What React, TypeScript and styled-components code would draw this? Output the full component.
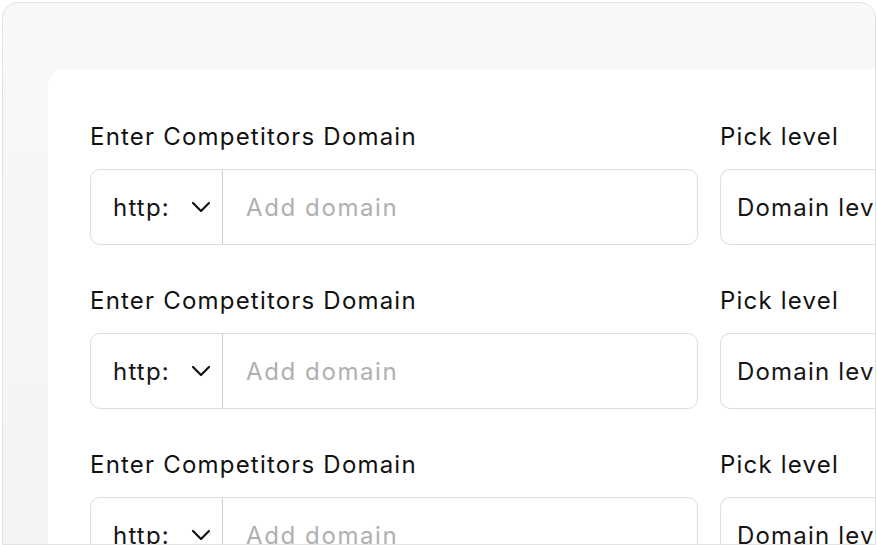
import React from 'react';
import styled, { createGlobalStyle } from 'styled-components';

const GlobalStyle = createGlobalStyle`
  html, body {
    margin: 0;
    padding: 0;
    background: #ffffff;
    overflow: hidden;
  }
  body {
    font-family: 'Inter', 'Noto Sans', sans-serif;
  }
`;

const Frame = styled.div`
  box-sizing: border-box;
  margin: 2px 1px 0 2px;
  height: 543px;
  border: 1px solid #e2e2e2;
  border-radius: 16px 16px 0 0;
  background: linear-gradient(180deg, #f9f9f9 0%, #f6f6f6 40%, #f4f4f4 100%);
  padding: 66px 0 0 45px;
  overflow: hidden;
`;

const Card = styled.div`
  background: #ffffff;
  border-radius: 16px 0 0 0;
  height: 100%;
  padding: 53px 0 0 42px;
  box-sizing: border-box;
  display: flex;
  flex-direction: column;
  gap: 41px;
`;

const Row = styled.div`
  display: flex;
  gap: 22px;
`;

const Field = styled.div<{ $width: number }>`
  display: flex;
  flex-direction: column;
  gap: 17px;
  width: ${(p) => p.$width}px;
  flex-shrink: 0;
`;

const Label = styled.div`
  height: 30px;
  line-height: 30px;
  font-size: 24px;
  color: #111111;
  letter-spacing: 1.2px;
  white-space: nowrap;
`;

const Group = styled.div`
  display: flex;
  height: 76px;
  box-sizing: border-box;
  border: 1.5px solid #dedede;
  border-radius: 10px;
  overflow: hidden;
`;

const Protocol = styled.div`
  width: 132px;
  flex-shrink: 0;
  display: flex;
  align-items: center;
  padding-left: 22px;
  box-sizing: border-box;
  border-right: 1.5px solid #cdcdcd;
  font-size: 24px;
  letter-spacing: 1.2px;
  color: #161616;
  gap: 21px;
`;

const Placeholder = styled.div`
  display: flex;
  align-items: center;
  padding-left: 23px;
  font-size: 24px;
  color: #b0b0b0;
  letter-spacing: 1.6px;
`;

const Level = styled.div`
  display: flex;
  align-items: center;
  height: 76px;
  box-sizing: border-box;
  border: 1.5px solid #dedede;
  border-right: none;
  border-radius: 10px 0 0 10px;
  padding-left: 16px;
  font-size: 24px;
  color: #161616;
  white-space: nowrap;
  overflow: hidden;
  letter-spacing: 1.2px;
`;

const Chevron = () => (
  <svg width="20" height="12" viewBox="0 0 20 12" fill="none">
    <path d="M2 2l8 8 8-8" stroke="#111" strokeWidth="2.2" strokeLinecap="round" strokeLinejoin="round" />
  </svg>
);

const DomainRow = () => (
  <Row>
    <Field $width={608}>
      <Label>Enter Competitors Domain</Label>
      <Group>
        <Protocol>
          http:
          <Chevron />
        </Protocol>
        <Placeholder>Add domain</Placeholder>
      </Group>
    </Field>
    <Field $width={200}>
      <Label>Pick level</Label>
      <Level>Domain level</Level>
    </Field>
  </Row>
);

export default function App() {
  return (
    <>
      <GlobalStyle />
      <Frame>
        <Card>
          {[0, 1, 2].map((i) => (
            <DomainRow key={i} />
          ))}
        </Card>
      </Frame>
    </>
  );
}
